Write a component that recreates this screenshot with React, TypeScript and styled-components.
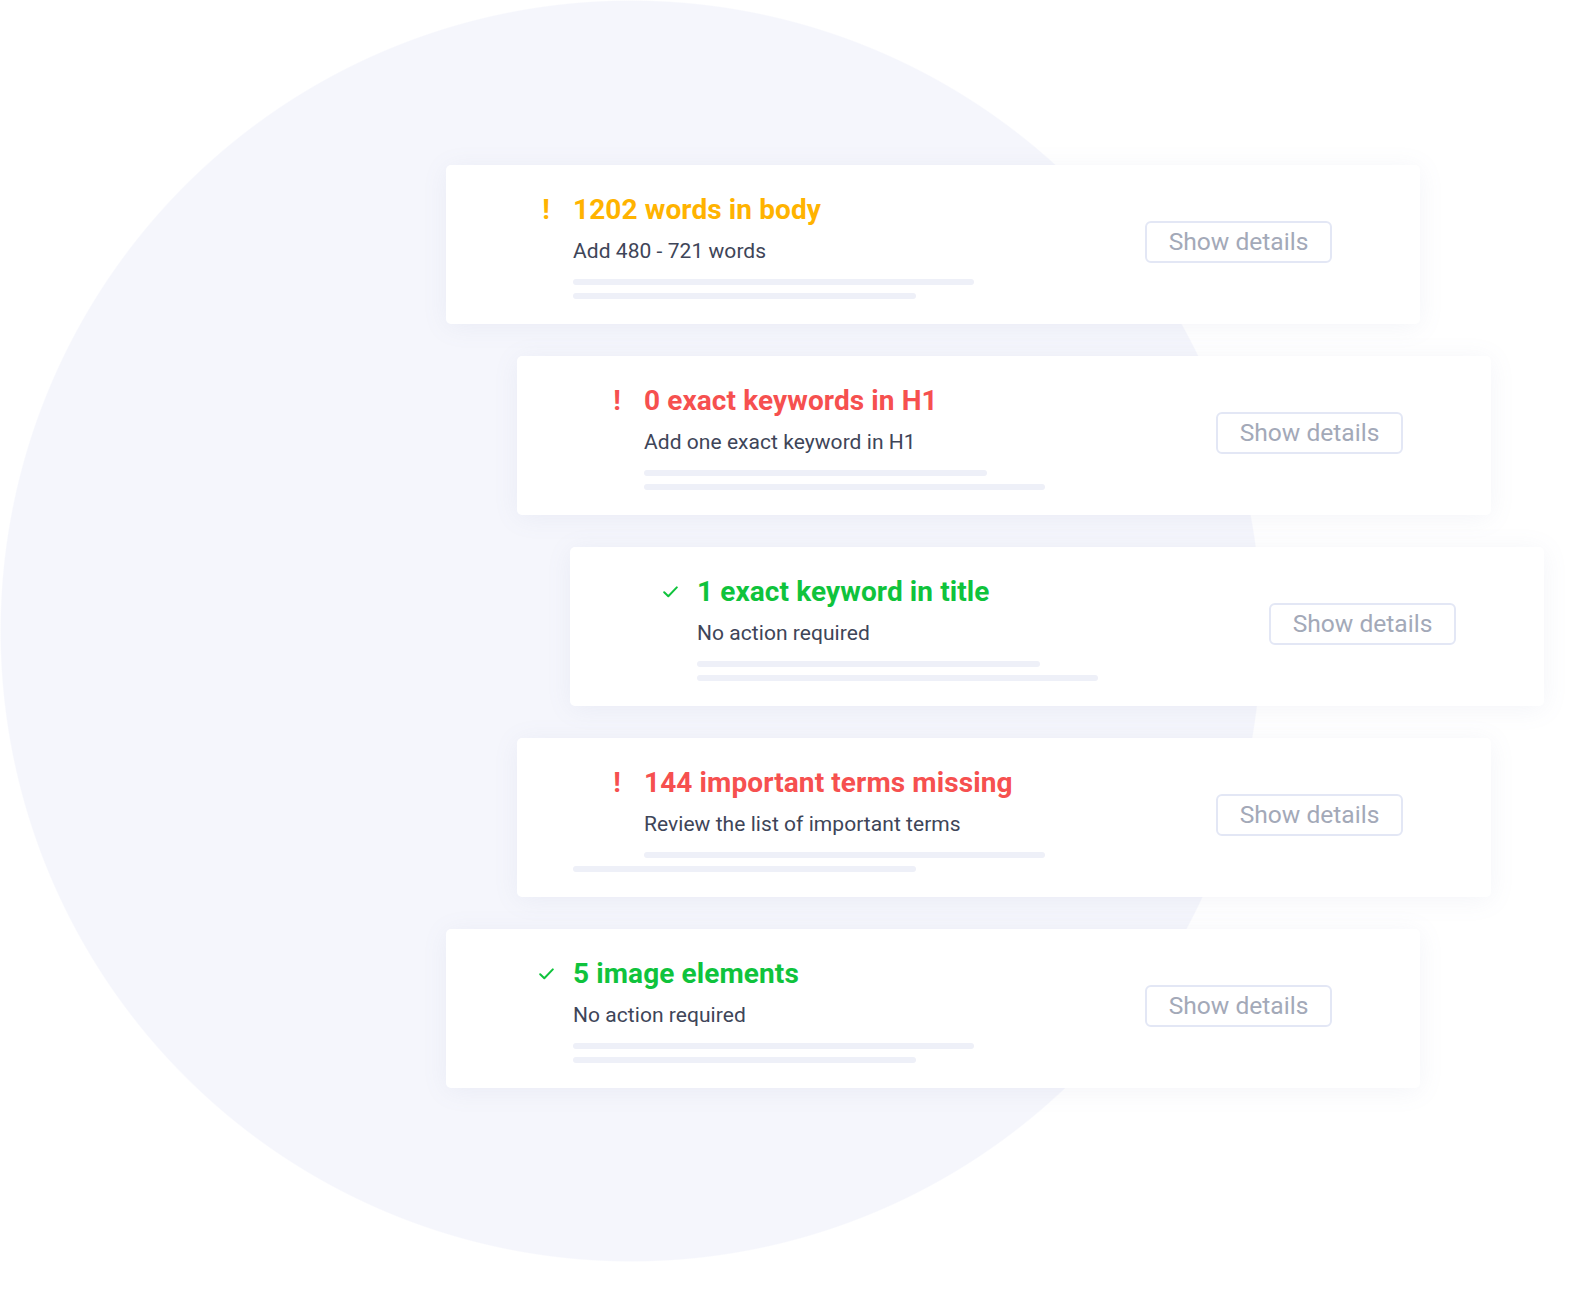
import React from "react";
import styled, { createGlobalStyle } from "styled-components";

const Global = createGlobalStyle`
  html, body { margin: 0; padding: 0; background: #ffffff; }
  body { font-family: Roboto, "Liberation Sans", sans-serif; -webkit-font-smoothing: antialiased; }
`;

type Tone = "warn" | "error" | "ok";

const toneColor: Record<Tone, string> = {
  warn: "#ffb300",
  error: "#f6504f",
  ok: "#0fc33c",
};

const Page = styled.div`
  width: 1587px;
  height: 1311px;
  box-sizing: border-box;
  padding-top: 165px;
  background: radial-gradient(circle 631px at 631px 631px, #f5f6fc 99.8%, rgba(245, 246, 252, 0) 100%);
  display: flex;
  flex-direction: column;
  gap: 32px;
`;

const Card = styled.div<{ $indent: number }>`
  margin-left: ${(p) => p.$indent}px;
  width: 974px;
  height: 159px;
  box-sizing: border-box;
  background: #ffffff;
  border-radius: 5px;
  box-shadow: 0 3px 26px rgba(120, 132, 175, 0.09);
  display: flex;
  align-items: flex-start;
  padding: 28px 88px 0 92px;
`;

const IconBox = styled.div<{ $tone: Tone }>`
  width: 16px;
  height: 34px;
  flex: none;
  display: flex;
  align-items: center;
  justify-content: center;
  color: ${(p) => toneColor[p.$tone]};
  font-size: 28px;
  font-weight: 700;
  line-height: 34px;
  margin-right: 19px;
`;

const Body = styled.div`
  display: flex;
  flex-direction: column;
  flex: 1;
`;

const Title = styled.div<{ $tone: Tone }>`
  font-size: 28px;
  font-weight: 700;
  line-height: 34px;
  color: ${(p) => toneColor[p.$tone]};
  letter-spacing: 0.1px;
`;

const Subtitle = styled.div`
  margin-top: 12px;
  font-size: 21px;
  line-height: 25px;
  color: #3e4558;
  letter-spacing: 0.05px;
`;

const Bars = styled.div`
  margin-top: 15px;
  display: flex;
  flex-direction: column;
  gap: 8px;
`;

const Bar = styled.div<{ $w: number; $shift?: number }>`
  width: ${(p) => p.$w}px;
  height: 6px;
  border-radius: 3px;
  background: #eef0f8;
  margin-left: ${(p) => p.$shift ?? 0}px;
`;

const DetailsButton = styled.button`
  flex: none;
  align-self: flex-start;
  margin-top: 28px;
  width: 187px;
  height: 42px;
  box-sizing: border-box;
  border: 2px solid #e3e7f5;
  border-radius: 6px;
  background: #ffffff;
  color: #a3a9b8;
  font-family: Roboto, "Liberation Sans", sans-serif;
  font-size: 24.6px;
  line-height: 28px;
  padding: 0;
  cursor: pointer;
`;

const Check = () => (
  <svg width="15" height="12" viewBox="0 0 15 12" fill="none">
    <path d="M1.2 6.2 L5.3 10.2 L13.8 1.4" stroke="currentColor" strokeWidth="2" strokeLinecap="round" strokeLinejoin="round" />
  </svg>
);

type Item = {
  indent: number;
  tone: Tone;
  title: string;
  sub: string;
  bars: { w: number; shift?: number }[];
};

const items: Item[] = [
  { indent: 446, tone: "warn", title: "1202 words in body", sub: "Add 480 - 721 words", bars: [{ w: 401 }, { w: 343 }] },
  { indent: 517, tone: "error", title: "0 exact keywords in H1", sub: "Add one exact keyword in H1", bars: [{ w: 343 }, { w: 401 }] },
  { indent: 570, tone: "ok", title: "1 exact keyword in title", sub: "No action required", bars: [{ w: 343 }, { w: 401 }] },
  { indent: 517, tone: "error", title: "144 important terms missing", sub: "Review the list of important terms", bars: [{ w: 401 }, { w: 343, shift: -71 }] },
  { indent: 446, tone: "ok", title: "5 image elements", sub: "No action required", bars: [{ w: 401 }, { w: 343 }] },
];

export default function App() {
  return (
    <>
      <Global />
      <Page>
        {items.map((it, i) => (
          <Card key={i} $indent={it.indent}>
            <IconBox $tone={it.tone}>{it.tone === "ok" ? <Check /> : "!"}</IconBox>
            <Body>
              <Title $tone={it.tone}>{it.title}</Title>
              <Subtitle>{it.sub}</Subtitle>
              <Bars>
                {it.bars.map((b, j) => (
                  <Bar key={j} $w={b.w} $shift={b.shift} />
                ))}
              </Bars>
            </Body>
            <DetailsButton>Show details</DetailsButton>
          </Card>
        ))}
      </Page>
    </>
  );
}
